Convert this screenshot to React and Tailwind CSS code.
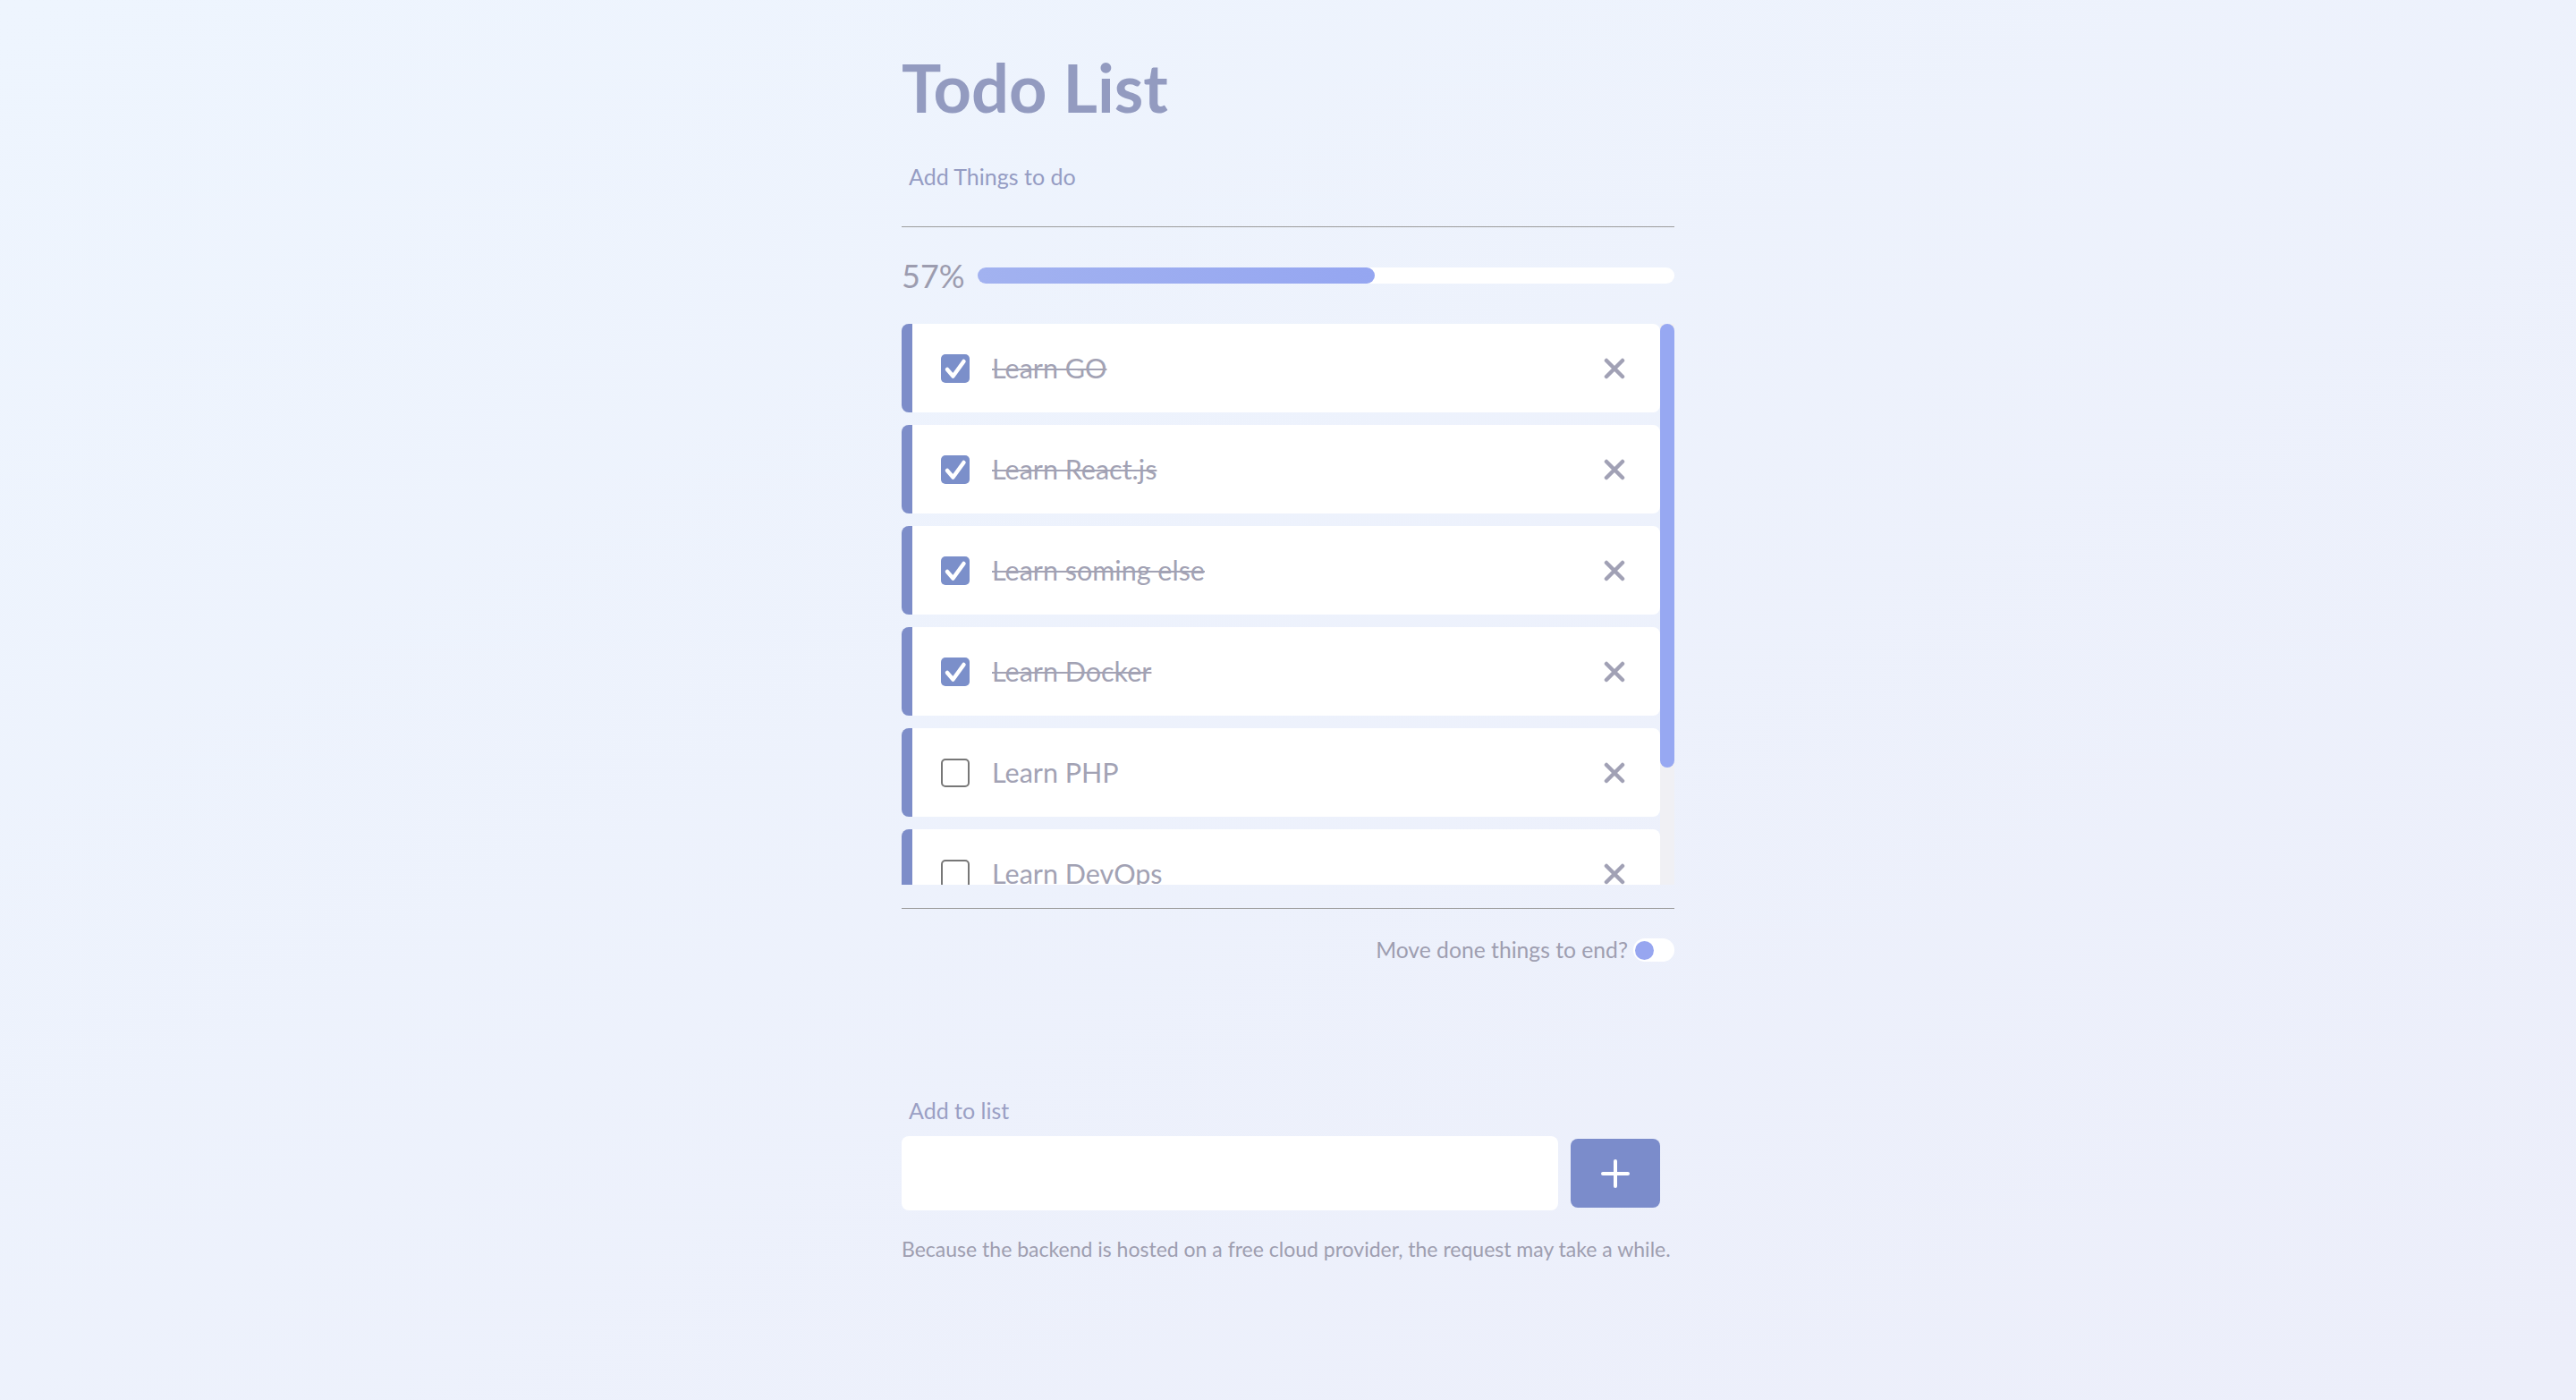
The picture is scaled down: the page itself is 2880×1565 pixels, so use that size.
import React from "react";

const todos = [
  { id: 1, text: "Learn GO", done: true },
  { id: 2, text: "Learn React.js", done: true },
  { id: 3, text: "Learn soming else", done: true },
  { id: 4, text: "Learn Docker", done: true },
  { id: 5, text: "Learn PHP", done: false },
  { id: 6, text: "Learn DevOps", done: false },
  { id: 7, text: "Learn Kubernetes", done: false },
];

function CheckBox({ checked }) {
  if (!checked) {
    return (
      <span className="w-8 h-8 shrink-0 rounded-[5px] border-2 border-[#777777] bg-white" />
    );
  }
  return (
    <span className="w-8 h-8 shrink-0 rounded-[5px] bg-[#7b8fca] flex items-center justify-center">
      <svg viewBox="0 0 32 32" className="w-8 h-8">
        <path
          d="M7 17 L13.5 24.5 L25.5 8"
          fill="none"
          stroke="white"
          strokeWidth="4.5"
          strokeLinecap="round"
          strokeLinejoin="round"
        />
      </svg>
    </span>
  );
}

function TodoItem({ item }) {
  return (
    <div className="h-[99px] mb-[14px] flex items-center bg-white rounded-lg border-l-[12px] border-[#7d8dc9] pl-8 pr-[39px]">
      <CheckBox checked={item.done} />
      <span
        className={
          item.done
            ? "ml-[25px] flex-1 text-[30.5px] text-[#a2a2b4] line-through decoration-2"
            : "ml-[25px] flex-1 text-[30.5px] text-[#a2a2b4]"
        }
      >
        {item.text}
      </span>
      <svg viewBox="0 0 24 24" className="w-6 h-6">
        <path
          d="M3 3 L21 21 M21 3 L3 21"
          fill="none"
          stroke="#a1a1b5"
          strokeWidth="4.5"
          strokeLinecap="round"
        />
      </svg>
    </div>
  );
}

export default function App() {
  const done = todos.filter((t) => t.done).length;
  const pct = Math.round((done / todos.length) * 100);

  return (
    <div className="min-h-screen w-full bg-gradient-to-br from-[#eef5fe] to-[#eceefa] font-['Lato','Liberation_Sans',sans-serif]">
      <div className="mx-auto w-[864px] flex flex-col">
        {/* Header */}
        <h1 className="mt-[48px] h-[100px] leading-[100px] text-[74px] font-bold text-[#939bc0]">
          Todo List
        </h1>
        <p className="mt-[29px] h-[40px] leading-[40px] pl-2 text-[25px] text-[#959cc3]">
          Add Things to do
        </p>
        <div className="mt-[36px] h-px bg-[#9c9c9c]" />

        {/* Progress */}
        <div className="mt-[34px] h-[40px] flex items-center">
          <span className="text-[36px] text-[#9c9caf] w-[85px]">{pct}%</span>
          <div className="flex-1 h-[18px] rounded-full bg-white">
            <div
              className="h-full rounded-full bg-gradient-to-r from-[#a2b2f0] to-[#95a6f1]"
              style={{ width: `${pct}%` }}
            />
          </div>
        </div>

        {/* List with scrollbar */}
        <div className="mt-[34px] h-[627px] flex">
          <div className="flex-1 overflow-hidden">
            {todos.map((t) => (
              <TodoItem key={t.id} item={t} />
            ))}
          </div>
          <div className="w-4 bg-[#f0f0f4]">
            <div className="h-[496px] rounded-full bg-[#97a8f2]" />
          </div>
        </div>

        <div className="mt-[26px] h-px bg-[#9c9c9c]" />

        {/* Toggle */}
        <div className="mt-[31px] h-[30px] flex items-center justify-end gap-[6px]">
          <span className="text-[24.7px] text-[#9e9eb0]">Move done things to end?</span>
          <span className="w-[46px] h-[26px] rounded-full bg-white flex items-center px-[2px]">
            <span className="w-[21px] h-[21px] rounded-full bg-[#97a6f0]" />
          </span>
        </div>

        {/* Add form */}
        <p className="mt-[144px] h-[40px] leading-[40px] pl-2 text-[25px] text-[#9a9fc4]">
          Add to list
        </p>
        <div className="mt-[9px] flex items-center">
          <input
            type="text"
            className="w-[734px] h-[83px] rounded-lg bg-white outline-none px-4 text-[28px] text-[#7a7a8c]"
          />
          <button className="ml-[14px] w-[100px] h-[77px] rounded-lg bg-[#7b8ccb] flex items-center justify-center">
            <svg viewBox="0 0 32 32" className="w-8 h-8">
              <path
                d="M16 2 V30 M2 16 H30"
                fill="none"
                stroke="white"
                strokeWidth="4"
                strokeLinecap="round"
              />
            </svg>
          </button>
        </div>
        <p className="mt-[28px] h-[30px] leading-[30px] text-[23px] text-[#9e9eb0] whitespace-nowrap">
          Because the backend is hosted on a free cloud provider, the request may take a while.
        </p>
      </div>
    </div>
  );
}
